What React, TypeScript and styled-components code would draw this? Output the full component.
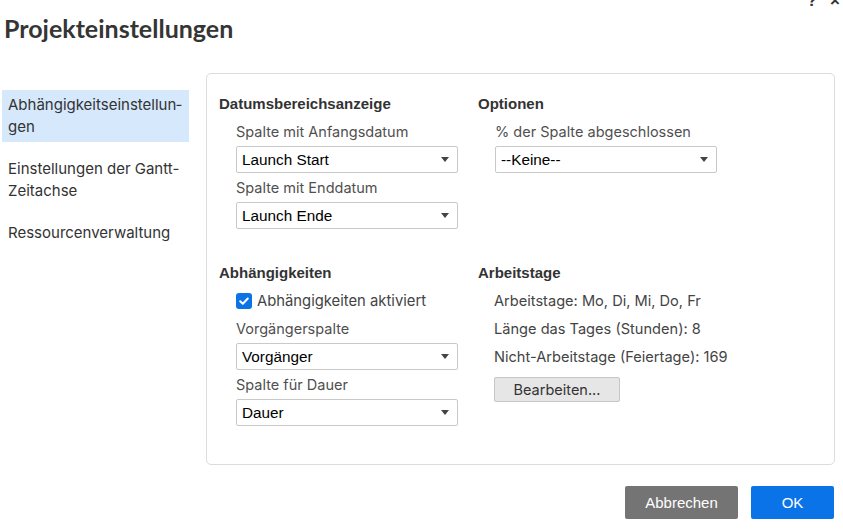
import React from "react";
import styled, { createGlobalStyle } from "styled-components";

const Global = createGlobalStyle`
  html, body { margin: 0; padding: 0; background: #fff; }
  body { font-family: Inter, "Liberation Sans", Arial, sans-serif; }
  * { box-sizing: border-box; }
`;

const Page = styled.div`
  width: 843px;
  height: 531px;
  overflow: hidden;
  display: flex;
  flex-direction: column;
`;

const Header = styled.div`
  height: 73px;
  display: flex;
  justify-content: space-between;
  align-items: flex-start;
  padding: 0 3px 0 4px;
`;

const Title = styled.h1`
  margin: 12px 0 0;
  font-family: Lato, "Noto Sans", sans-serif;
  font-weight: 700;
  font-size: 25px;
  line-height: 32px;
  color: #353535;
`;

const Tools = styled.div`
  display: flex;
  gap: 13px;
  margin-top: -8px;
  font-family: "Liberation Sans", Arial, sans-serif;
  font-weight: 700;
  font-size: 17px;
  line-height: 17px;
  color: #333;
`;

const Body = styled.div`
  display: flex;
  gap: 17px;
  padding: 0 8px 0 2px;
`;

const Sidebar = styled.nav`
  width: 187px;
  flex: none;
  margin-top: 17px;
  display: flex;
  flex-direction: column;
  gap: 12px;
`;

const NavItem = styled.div<{ $active?: boolean }>`
  padding: 4px 6px;
  font-size: 15px;
  line-height: 22px;
  color: #333;
  background: ${(p) => (p.$active ? "#d6e8fb" : "transparent")};
  hyphens: manual;
`;

const Panel = styled.section`
  flex: 1;
  height: 392px;
  border: 1px solid #dcdcdc;
  border-radius: 5px;
  padding: 20px 12px;
  display: grid;
  grid-template-columns: 259px 1fr;
  grid-auto-rows: min-content;
  row-gap: 34px;
  align-items: start;
`;

const Section = styled.div``;

const Heading = styled.h2`
  margin: 0;
  font-family: "Liberation Sans", Arial, sans-serif;
  font-weight: 700;
  font-size: 15px;
  line-height: 20px;
  color: #333;
`;

const Indent = styled.div`
  padding-left: 17px;
  margin-top: 8px;
  display: flex;
  flex-direction: column;
  gap: 5px;
`;

const Field = styled.div`
  display: flex;
  flex-direction: column;
  gap: 4px;
`;

const Label = styled.div`
  font-size: 14.5px;
  line-height: 20px;
  color: #505050;
`;

const SelectBox = styled.div`
  width: 222px;
  height: 27px;
  border: 1px solid #c9c9c9;
  border-radius: 2px;
  padding: 0 8px 0 5px;
  display: flex;
  align-items: center;
  justify-content: space-between;
  font-family: "Liberation Sans", Arial, sans-serif;
  font-size: 15.3px;
  color: #000;
  background: #fff;
`;

const Caret = styled.span`
  width: 0;
  height: 0;
  border-left: 4px solid transparent;
  border-right: 4px solid transparent;
  border-top: 5px solid #444;
`;

const CheckRow = styled.label`
  display: flex;
  align-items: center;
  gap: 5px;
  height: 20px;
  margin-bottom: 3px;
  font-size: 14.8px;
  color: #444;
`;

const Check = styled.span`
  width: 16px;
  height: 16px;
  border-radius: 3px;
  background: #0b73e6;
  display: inline-flex;
  align-items: center;
  justify-content: center;
`;

const InfoList = styled.div`
  padding-left: 16px;
  margin-top: 4px;
  display: flex;
  flex-direction: column;
  align-items: flex-start;
`;

const InfoLine = styled.div`
  font-size: 14.6px;
  line-height: 28px;
  color: #444;
`;

const GreyButton = styled.button`
  margin-top: 6px;
  width: 126px;
  height: 25px;
  border: 1px solid #c6c6c6;
  border-radius: 2px;
  background: #e6e6e6;
  font-family: Inter, sans-serif;
  font-size: 14.5px;
  color: #333;
  padding: 0;
`;

const Footer = styled.div`
  display: flex;
  justify-content: flex-end;
  gap: 13px;
  padding: 21px 9px 0 0;
`;

const ActionButton = styled.button<{ $primary?: boolean }>`
  height: 33px;
  min-width: ${(p) => (p.$primary ? "83px" : "113px")};
  padding: 0 20px;
  border: none;
  border-radius: 2px;
  background: ${(p) => (p.$primary ? "#0a73e8" : "#747474")};
  color: #fff;
  font-family: "Liberation Sans", Arial, sans-serif;
  font-size: 15px;
`;

function Select({ value }: { value: string }) {
  return (
    <SelectBox>
      <span>{value}</span>
      <Caret />
    </SelectBox>
  );
}

export default function App() {
  return (
    <Page>
      <Global />
      <Header>
        <Title>Projekteinstellungen</Title>
        <Tools>
          <span>?</span>
          <span>×</span>
        </Tools>
      </Header>
      <Body>
        <Sidebar>
          <NavItem $active>Abhängigkeitseinstellun{"\u00AD"}gen</NavItem>
          <NavItem>Einstellungen der Gantt-Zeitachse</NavItem>
          <NavItem>Ressourcenverwaltung</NavItem>
        </Sidebar>
        <Panel>
          <Section>
            <Heading>Datumsbereichsanzeige</Heading>
            <Indent>
              <Field>
                <Label>Spalte mit Anfangsdatum</Label>
                <Select value="Launch Start" />
              </Field>
              <Field>
                <Label>Spalte mit Enddatum</Label>
                <Select value="Launch Ende" />
              </Field>
            </Indent>
          </Section>
          <Section>
            <Heading>Optionen</Heading>
            <Indent>
              <Field>
                <Label>% der Spalte abgeschlossen</Label>
                <Select value="--Keine--" />
              </Field>
            </Indent>
          </Section>
          <Section>
            <Heading>Abhängigkeiten</Heading>
            <Indent>
              <CheckRow>
                <Check>
                  <svg width="12" height="12" viewBox="0 0 12 12">
                    <path d="M2.2 6.2 L4.8 8.7 L9.8 3.5" fill="none" stroke="#fff" strokeWidth="2" strokeLinecap="round" strokeLinejoin="round" />
                  </svg>
                </Check>
                Abhängigkeiten aktiviert
              </CheckRow>
              <Field>
                <Label>Vorgängerspalte</Label>
                <Select value="Vorgänger" />
              </Field>
              <Field>
                <Label>Spalte für Dauer</Label>
                <Select value="Dauer" />
              </Field>
            </Indent>
          </Section>
          <Section>
            <Heading>Arbeitstage</Heading>
            <InfoList>
              <InfoLine>Arbeitstage: Mo, Di, Mi, Do, Fr</InfoLine>
              <InfoLine>Länge das Tages (Stunden): 8</InfoLine>
              <InfoLine>Nicht-Arbeitstage (Feiertage): 169</InfoLine>
              <GreyButton>Bearbeiten...</GreyButton>
            </InfoList>
          </Section>
        </Panel>
      </Body>
      <Footer>
        <ActionButton>Abbrechen</ActionButton>
        <ActionButton $primary>OK</ActionButton>
      </Footer>
    </Page>
  );
}
